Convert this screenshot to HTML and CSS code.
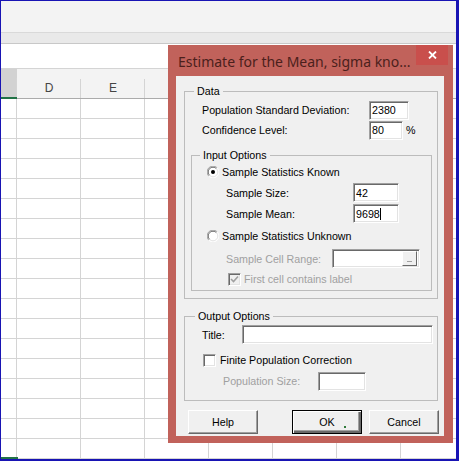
FILE: index.html
```html
<!DOCTYPE html>
<html lang="en">
<head>
    <meta charset="UTF-8">
    <title>Estimate for the Mean</title>
    <link rel="stylesheet" href="styles.css">
</head>
<body>
  <div class="screen">
    <div class="ribbon"></div>
    <div class="tabs"></div>
    <div class="formula"></div>
    <div class="colheads">
      <div class="colhead sel"></div>
      <div class="colhead">D</div>
      <div class="colhead">E</div>
      <div class="colhead"></div>
      <div class="colhead"></div>
      <div class="colhead"></div>
      <div class="colhead"></div>
      <div class="colhead"></div>
    </div>
    <div class="cells"></div>

    <!-- the dialog floats over the sheet -->
    <div class="dialog">
      <div class="titlebar">
        <span class="title">Estimate for the Mean, sigma kno...</span>
        <span class="close">
          <svg width="9" height="8" viewBox="0 0 9 8"><path d="M1 0.5 L8 7.5 M8 0.5 L1 7.5" stroke="#fff" stroke-width="1.8" fill="none"/></svg>
        </span>
      </div>

      <div class="client">
        <fieldset class="group data">
          <legend>Data</legend>
          <div class="row">
            <span class="lbl">Population Standard Deviation:</span>
            <span class="field w40">2380</span>
          </div>
          <div class="row">
            <span class="lbl">Confidence Level:</span>
            <span class="field w34">80</span>
            <span class="pct">%</span>
          </div>

          <fieldset class="group inputs">
            <legend>Input Options</legend>
            <div class="row opt">
              <svg class="radio" width="12" height="12" viewBox="0 0 12 12">
                <circle cx="6" cy="6" r="5.5" fill="#fff"/>
                <path d="M1.8 10.2 A5.5 5.5 0 0 1 10.2 1.8" stroke="#a0a0a0" fill="none"/>
                <path d="M2.6 9.4 A4.5 4.5 0 0 1 9.4 2.6" stroke="#696969" fill="none"/>
                <path d="M10.2 1.8 A5.5 5.5 0 0 1 1.8 10.2" stroke="#fff" fill="none"/>
                <path d="M9.4 2.6 A4.5 4.5 0 0 1 2.6 9.4" stroke="#e3e3e3" fill="none"/>
                <circle cx="6" cy="6" r="2" fill="#000"/>
              </svg>
              Sample Statistics Known
            </div>
            <div class="row sub">
              <span class="lbl">Sample Size:</span>
              <span class="field w46">42</span>
            </div>
            <div class="row sub">
              <span class="lbl">Sample Mean:</span>
              <span class="field w46">9698<span class="caret"></span></span>
            </div>
            <div class="row opt tall">
              <svg class="radio" width="12" height="12" viewBox="0 0 12 12">
                <circle cx="6" cy="6" r="5.5" fill="#fff"/>
                <path d="M1.8 10.2 A5.5 5.5 0 0 1 10.2 1.8" stroke="#a0a0a0" fill="none"/>
                <path d="M2.6 9.4 A4.5 4.5 0 0 1 9.4 2.6" stroke="#696969" fill="none"/>
                <path d="M10.2 1.8 A5.5 5.5 0 0 1 1.8 10.2" stroke="#fff" fill="none"/>
                <path d="M9.4 2.6 A4.5 4.5 0 0 1 2.6 9.4" stroke="#e3e3e3" fill="none"/>
              </svg>
              Sample Statistics Unknown
            </div>
            <div class="row sub off">
              <span class="lbl range">Sample Cell Range:</span>
              <span class="field w88 picker"><span class="pick-btn"><span class="dash"></span></span></span>
            </div>
            <div class="row chk off">
              <span class="box dis">
                <svg width="9" height="9" viewBox="0 0 9 9"><path d="M1 4 L3.5 6.5 L8 1.5" stroke="#a0a0a0" stroke-width="1.6" fill="none"/></svg>
              </span>
              First cell contains label
            </div>
          </fieldset>
        </fieldset>

        <fieldset class="group output">
          <legend>Output Options</legend>
          <div class="row">
            <span class="lbl short">Title:</span>
            <span class="field w191"></span>
          </div>
          <div class="row chk2">
            <span class="box"></span>
            Finite Population Correction
          </div>
          <div class="row off pop">
            <span class="lbl">Population Size:</span>
            <span class="field w48"></span>
          </div>
        </fieldset>

        <div class="buttons">
          <span class="btn help">Help</span>
          <span class="btn default">OK<span class="dot"></span></span>
          <span class="btn cancel">Cancel</span>
        </div>
      </div>
    </div>
  </div>
</body>
</html>
```

FILE: styles.css
```css
*{
  box-sizing: border-box;
}
body{
  margin: 0;
  background: #fff;
  font-family: "Liberation Sans", Arial, sans-serif;
  font-size: 10.7px;
  color: #000;
}

/* excel window behind */
.screen{
  position: relative;
  width: 459px;
  height: 461px;
  border-style: solid;
  border-color: #1814b4;
  border-width: 1px 3px 2px 1px;
  display: flex;
  flex-direction: column;
  overflow: hidden;
}
.ribbon{
  height: 32px;
  background: #f3f3f3;
  border-bottom: 1px solid #d9d9d9;
}
.tabs{
  height: 11px;
  background: #e9e9e9;
  border-bottom: 1px solid #c8c8c8;
}
.formula{
  height: 25px;
  background: #fff;
  border-bottom: 1px solid #d4d4d4;
}
.colheads{
  height: 30px;
  display: flex;
  background: #f3f3f3;
}
.colhead{
  flex: none;
  width: 64px;
  height: 30px;
  padding-top: 12px;
  text-align: center;
  color: #444;
  font-size: 12px;
  line-height: 14px;
  border-bottom: 1px solid #ababab;
  background: linear-gradient(#d4d4d4, #d4d4d4) right bottom / 1px 19px no-repeat;
}
.colhead.sel{
  width: 16px;
  background-color: #d2d2d2;
  border-bottom: 2px solid #217346;
}
.cells{
  position: relative;
  flex: 1;
  background-color: #fff;
  background-image:
    linear-gradient(to bottom, transparent 19px, #d4d4d4 19px),
    linear-gradient(to right, transparent 63px, #d4d4d4 63px);
  background-size: 100% 20px, 64px 100%;
  background-position: 0 0, -48px 0;
}
.cells::after{
  content: "";
  position: absolute;
  left: 0;
  bottom: 0;
  width: 17px;
  height: 2px;
  background: #217346;
}

/* dialog */
.dialog{
  position: absolute;
  left: 167px;
  top: 44px;
  width: 285px;
  height: 398px;
  background: #c1625b;
  display: flex;
  flex-direction: column;
}
.titlebar{
  height: 31px;
  flex: none;
  display: flex;
  align-items: flex-start;
  padding-left: 10px;
}
.title{
  padding-top: 7px;
  line-height: 20px;
  font-family: "Noto Sans", "Open Sans", sans-serif;
  font-size: 14px;
  color: #4b1f1c;
  white-space: nowrap;
}
.close{
  margin-left: auto;
  margin-right: 5px;
  width: 32px;
  height: 20px;
  background: #c94f4c;
  display: flex;
  align-items: center;
  justify-content: center;
}
.client{
  flex: 1;
  margin: 0 9px 7px 8px;
  background: #f0f0f0;
  padding-top: 8px;
  display: flex;
  flex-direction: column;
}

.group{
  margin: 0;
  padding: 0;
  min-width: 0;
  border: 1px solid #bcbcbc;
}
.group legend{
  margin-left: 9px;
  padding: 0 3px;
  line-height: 14px;
  font-size: 10.7px;
}
.data{
  margin: 0 6px 0 8px;
  padding: 2px 0 7px;
}
.inputs{
  margin: 8px 5px 0 6px;
  padding: 0 0 1px;
}
.inputs legend{
  margin-left: 8px;
}
.output{
  margin: 10px 6px 0 8px;
  padding: 1px 0 9px;
}
.output legend{
  margin-left: 10px;
}

.row{
  display: flex;
  align-items: center;
  height: 20px;
  white-space: nowrap;
}
.data > .row{
  padding-left: 17px;
}
.data > .row .lbl{
  width: 167px;
}
.pct{
  margin-left: 3px;
}
.opt{
  padding-left: 15px;
}
.opt .radio{
  margin-right: 3px;
}
.tall{
  height: 24px;
}
.sub{
  padding-left: 34px;
  height: 21px;
}
.sub .lbl{
  width: 127px;
}
.sub .lbl.range{
  width: 106px;
}
.off{
  color: #a0a0a0;
}
.chk{
  padding-left: 36px;
  height: 20px;
}
.chk .box{
  margin-right: 3px;
}
.output > .row{
  padding-left: 17px;
}
.output .lbl.short{
  width: 40px;
}
.output > .row:first-of-type{
  height: 21px;
}
.chk2{
  margin-top: 5px;
}
.output > .row.chk2{
  padding-left: 18px;
}
.chk2 .box{
  margin-right: 4px;
}
.output > .row.pop{
  padding-left: 38px;
  margin-top: 1px;
}
.pop .lbl{
  width: 95px;
}

/* sunken controls */
.field, .box{
  position: relative;
  flex: none;
  display: inline-flex;
  align-items: center;
  height: 19px;
  padding-left: 2px;
  color: #000;
  background: #fff;
  border-style: solid;
  border-width: 1px;
  border-color: #a0a0a0 #fff #fff #a0a0a0;
  box-shadow: inset 1px 1px 0 #696969, inset -1px -1px 0 #e3e3e3;
}
.w34{ width: 34px; }
.w40{ width: 40px; }
.w46{ width: 46px; }
.w48{ width: 48px; }
.w88{ width: 88px; }
.w191{ width: 191px; }
.caret{
  display: inline-block;
  width: 1px;
  height: 12px;
  background: #000;
}
.picker{
  justify-content: flex-end;
  padding: 2px;
}
.pick-btn{
  width: 15px;
  height: 15px;
  background: #f0f0f0;
  border-style: solid;
  border-width: 1px;
  border-color: #fff #696969 #696969 #fff;
  display: flex;
  justify-content: center;
  align-items: flex-end;
  padding-bottom: 3px;
}
.dash{
  width: 5px;
  height: 1px;
  background: #a0a0a0;
}
.box{
  width: 13px;
  height: 13px;
  padding: 0;
  justify-content: center;
}
.box.dis{
  background: #f0f0f0;
}

/* buttons */
.buttons{
  display: flex;
  margin-top: 9px;
  padding-left: 12px;
}
.btn{
  position: relative;
  width: 70px;
  height: 24px;
  display: flex;
  align-items: center;
  justify-content: center;
  background: #f0f0f0;
  border-style: solid;
  border-width: 1px;
  border-color: #fff #696969 #696969 #fff;
  box-shadow: inset -1px -1px 0 #a0a0a0;
}
.btn.default{
  margin-left: 34px;
  border: 1px solid #000;
  box-shadow: inset 1px 1px 0 #fff, inset -2px -2px 0 #696969, inset -3px -3px 0 #a0a0a0;
}
.btn.cancel{
  margin-left: 7px;
}
.dot{
  position: absolute;
  left: 51px;
  top: 15px;
  width: 2px;
  height: 2px;
  background: #2f7a3a;
}
```
